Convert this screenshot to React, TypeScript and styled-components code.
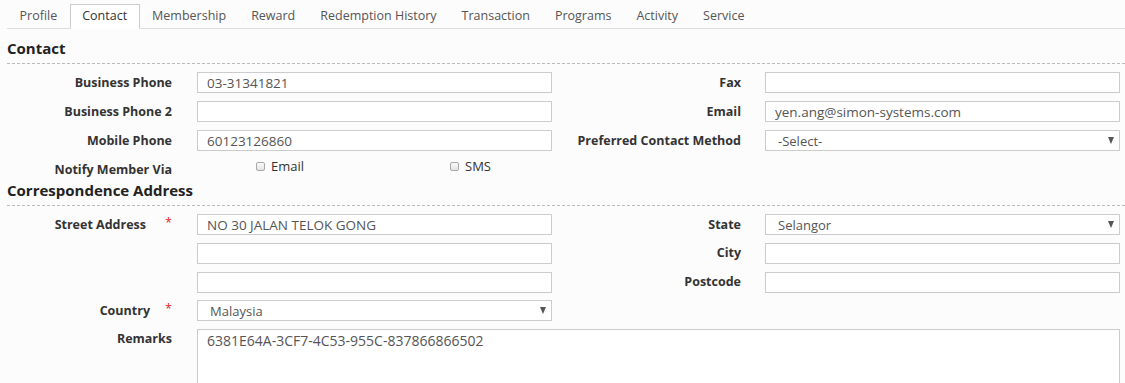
import React from "react";
import styled, { createGlobalStyle } from "styled-components";

const GlobalStyle = createGlobalStyle`
  html, body {
    margin: 0;
    padding: 0;
    overflow: hidden;
    background: #fcfcfc;
  }
  body {
    font-family: "Open Sans", "Liberation Sans", Arial, sans-serif;
    font-size: 13px;
    color: #333;
  }
  * { box-sizing: border-box; }
`;

const Page = styled.div`
  padding-left: 7px;
`;

const TabBar = styled.div`
  display: flex;
  padding-top: 4px;
  border-bottom: 1px solid #ddd;
`;

const Tab = styled.div<{ $active?: boolean }>`
  height: 25px;
  padding: 0 11.5px 2px;
  display: flex;
  align-items: center;
  font-size: 12.5px;
  color: ${(p) => (p.$active ? "#333" : "#555")};
  background: ${(p) => (p.$active ? "#fff" : "transparent")};
  border: 1px solid ${(p) => (p.$active ? "#ccc" : "transparent")};
  border-bottom-color: ${(p) => (p.$active ? "#fff" : "transparent")};
  margin-bottom: -1px;
  cursor: pointer;
`;

const SectionTitle = styled.h3<{ $top: number }>`
  margin: ${(p) => p.$top}px 0 0 0;
  padding-bottom: 5px;
  font-size: 15px;
  line-height: 20px;
  font-weight: 700;
  color: #222;
  border-bottom: 1px dashed #bbb;
`;

const FormGrid = styled.div<{ $rowGap: number; $top: number }>`
  display: grid;
  grid-template-columns: 190px 355px 213px 355px;
  row-gap: ${(p) => p.$rowGap}px;
  margin-top: ${(p) => p.$top}px;
  align-items: center;
`;

const Label = styled.div<{ $right: number; $top?: boolean; $pad?: number }>`
  display: flex;
  justify-content: flex-end;
  align-items: center;
  padding-right: ${(p) => p.$right}px;
  padding-top: ${(p) => p.$pad ?? 0}px;
  font-size: 12.5px;
  font-weight: 700;
  color: #333;
  line-height: 20px;
  align-self: ${(p) => (p.$top ? "start" : "center")};
`;

const Required = styled.span<{ $gap?: number }>`
  color: #e02020;
  font-weight: 400;
  font-size: 12px;
  width: 7px;
  margin-left: ${(p) => p.$gap ?? 19}px;
  margin-top: -3px;
  text-align: center;
`;

const Input = styled.input`
  width: 100%;
  height: 21px;
  border: 1px solid #ccc;
  background: #fff;
  padding: 0 9px;
  font-family: inherit;
  font-size: 13.5px;
  color: #555;
  outline: none;
`;

const SelectWrap = styled.div`
  position: relative;
  height: 21px;
`;

const Select = styled.select`
  appearance: none;
  -webkit-appearance: none;
  width: 100%;
  height: 21px;
  border: 1px solid #ccc;
  border-radius: 0;
  background: #fff;
  padding: 0 20px 0 12px;
  font-family: inherit;
  font-size: 13px;
  color: #555;
  outline: none;
`;

const Arrow = styled.span`
  position: absolute;
  right: 6px;
  top: 7px;
  width: 0;
  height: 0;
  border-left: 3.5px solid transparent;
  border-right: 3.5px solid transparent;
  border-top: 7px solid #555;
  pointer-events: none;
`;

const TextArea = styled.textarea`
  grid-column: 2 / span 3;
  width: 100%;
  height: 90px;
  border: 1px solid #ccc;
  background: #fff;
  padding: 1px 9px;
  font-family: inherit;
  font-size: 14px;
  line-height: 20px;
  color: #555;
  resize: none;
  outline: none;
`;

const CheckGroup = styled.div`
  grid-column: 2 / span 3;
  display: flex;
  align-items: center;
  padding-left: 59px;
  margin-top: -7px;
`;

const CheckItem = styled.label<{ $width?: number }>`
  display: flex;
  align-items: center;
  gap: 6px;
  width: ${(p) => (p.$width ? `${p.$width}px` : "auto")};
  font-size: 13px;
  color: #333;
  line-height: 20px;
`;

const Box = styled.span`
  width: 9px;
  height: 9px;
  border: 1px solid #a9a9a9;
  border-radius: 2px;
  background: linear-gradient(#fafafa, #e4e4e4);
`;

const Empty = styled.div``;

const tabs = [
  "Profile",
  "Contact",
  "Membership",
  "Reward",
  "Redemption History",
  "Transaction",
  "Programs",
  "Activity",
  "Service",
];

function Sel({ value }: { value: string }) {
  return (
    <SelectWrap>
      <Select defaultValue={value}>
        <option>{value}</option>
      </Select>
      <Arrow />
    </SelectWrap>
  );
}

export default function App() {
  return (
    <>
      <GlobalStyle />
      <Page>
        <TabBar>
          {tabs.map((t) => (
            <Tab key={t} $active={t === "Contact"}>
              {t}
            </Tab>
          ))}
        </TabBar>

        <SectionTitle $top={9}>Contact</SectionTitle>
        <FormGrid $rowGap={8} $top={8}>
          <Label $right={25}>Business Phone</Label>
          <Input defaultValue="03-31341821" />
          <Label $right={24}>Fax</Label>
          <Input defaultValue="" />

          <Label $right={25}>Business Phone 2</Label>
          <Input defaultValue="" />
          <Label $right={24}>Email</Label>
          <Input defaultValue="yen.ang@simon-systems.com" />

          <Label $right={25}>Mobile Phone</Label>
          <Input defaultValue="60123126860" />
          <Label $right={24}>Preferred Contact Method</Label>
          <Sel value="-Select-" />

          <Label $right={25} $pad={1}>
            Notify Member Via
          </Label>
          <CheckGroup>
            <CheckItem $width={194}>
              <Box />
              Email
            </CheckItem>
            <CheckItem>
              <Box />
              SMS
            </CheckItem>
          </CheckGroup>
        </FormGrid>

        <SectionTitle $top={0}>Correspondence Address</SectionTitle>
        <FormGrid $rowGap={7.75} $top={8}>
          <Label $right={25}>
            Street Address<Required>*</Required>
          </Label>
          <Input defaultValue="NO 30 JALAN TELOK GONG" />
          <Label $right={24}>State</Label>
          <Sel value="Selangor" />

          <Empty />
          <Input defaultValue="" />
          <Label $right={24}>City</Label>
          <Input defaultValue="" />

          <Empty />
          <Input defaultValue="" />
          <Label $right={24}>Postcode</Label>
          <Input defaultValue="" />

          <Label $right={25}>
            Country<Required $gap={15}>*</Required>
          </Label>
          <Sel value="Malaysia" />
          <Empty />
          <Empty />

          <Label $right={25} $top>
            Remarks
          </Label>
          <TextArea defaultValue="6381E64A-3CF7-4C53-955C-837866866502" />
        </FormGrid>
      </Page>
    </>
  );
}
